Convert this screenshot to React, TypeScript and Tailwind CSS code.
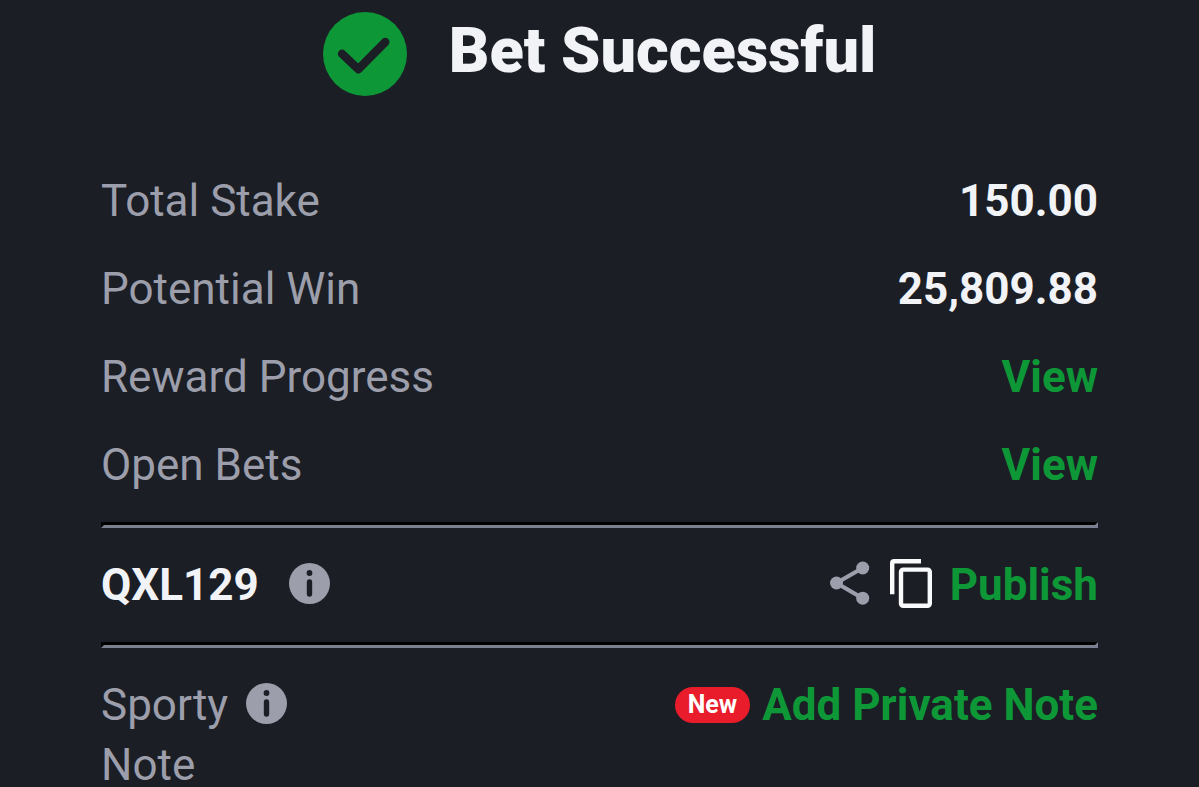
import React from 'react';

type SummaryRow = {
    label: string;
    value?: string;
    href?: string;
};

const rows: SummaryRow[] = [
    { label: 'Total Stake', value: '150.00' },
    { label: 'Potential Win', value: '25,809.88' },
    { label: 'Reward Progress', href: '#rewards' },
    { label: 'Open Bets', href: '#open-bets' },
];

const SuccessIcon: React.FC = () => (
    <svg width="84" height="84" viewBox="0 0 84 84" fill="none" className="shrink-0" aria-hidden="true">
        <circle cx="42" cy="42" r="42" fill="#0e9737" />
        <path d="M19 41.8L35.3 57.2L62.3 30" stroke="#1b1e25" strokeWidth="8.4" strokeLinecap="round" strokeLinejoin="round" />
    </svg>
);

const InfoIcon: React.FC = () => (
    <svg width="41" height="41" viewBox="0 0 41 41" fill="none" aria-hidden="true">
        <circle cx="20.5" cy="20.5" r="20.5" fill="#9c9fab" />
        <circle cx="20.5" cy="10" r="2.9" fill="#1b1e25" />
        <path d="M20.5 19V31" stroke="#1b1e25" strokeWidth="5.4" strokeLinecap="round" />
    </svg>
);

const ShareIcon: React.FC = () => (
    <svg width="40" height="44" viewBox="0 0 40 44" fill="none" aria-hidden="true">
        <path d="M32.6 7L6.5 22L32.6 37.2" stroke="#9c9fab" strokeWidth="4.2" />
        <circle cx="6.5" cy="22" r="6.5" fill="#9c9fab" />
        <circle cx="32.7" cy="7" r="6.5" fill="#9c9fab" />
        <circle cx="32.7" cy="37.2" r="6.5" fill="#9c9fab" />
    </svg>
);

const CopyIcon: React.FC = () => (
    <svg width="42" height="49" viewBox="0 0 42 49" fill="none" stroke="#f9fafb" aria-hidden="true">
        <path d="M2.2 35.3V4.2Q2.2 2.2 4.2 2.2H31" strokeWidth="4.4" />
        <rect x="11" y="10.6" width="28.8" height="36.2" rx="2.2" strokeWidth="4.4" />
    </svg>
);

const Divider: React.FC = () => (
    <hr className="my-[27px] h-0 border-[3px] border-t-black border-l-black border-r-[#7b7f90] border-b-[#7b7f90]" />
);

const App: React.FC = () => {
    return (
        <main className="min-h-screen bg-[#1b1e25] px-[101px] pt-3 font-['Roboto',sans-serif] text-[44px] leading-[60px] text-[#9c9fab]">
            <header className="mb-[75px] flex items-start justify-center gap-[42px]">
                <SuccessIcon />
                <h1 className="text-[63px] leading-[78px] font-black text-[#f1f3f7]">Bet Successful</h1>
            </header>

            <dl className="space-y-7">
                {rows.map(row => (
                    <div key={row.label} className="flex justify-between">
                        <dt>{row.label}</dt>
                        <dd className="font-bold text-[#f1f3f7]">
                            {row.href ? <a href={row.href} className="text-[#0e9737]">View</a> : row.value}
                        </dd>
                    </div>
                ))}
            </dl>

            <Divider />

            <div className="flex items-start justify-between">
                <div className="flex items-start gap-[30px]">
                    <span className="font-bold text-[#f1f3f7]">QXL129</span>
                    <button type="button" aria-label="Booking code info" className="flex h-14 items-center"><InfoIcon /></button>
                </div>
                <div className="flex items-start">
                    <button type="button" aria-label="Share" className="mr-5 flex h-14 items-center"><ShareIcon /></button>
                    <button type="button" aria-label="Copy code" className="mr-[18px] flex h-14 items-center"><CopyIcon /></button>
                    <button type="button" className="font-bold text-[#0e9737]">Publish</button>
                </div>
            </div>

            <Divider />

            <div className="flex items-start justify-between">
                <div className="flex items-start gap-[18px]">
                    <span className="w-min">Sporty Note</span>
                    <button type="button" aria-label="Sporty Note info" className="flex h-14 items-center"><InfoIcon /></button>
                </div>
                <div className="flex items-center gap-3">
                    <span className="rounded-full bg-[#e81c2a] px-[13px] text-[25px] leading-9 font-bold text-white">New</span>
                    <button type="button" className="font-bold text-[#0e9737]">Add Private Note</button>
                </div>
            </div>
        </main>
    );
};

export default App;
